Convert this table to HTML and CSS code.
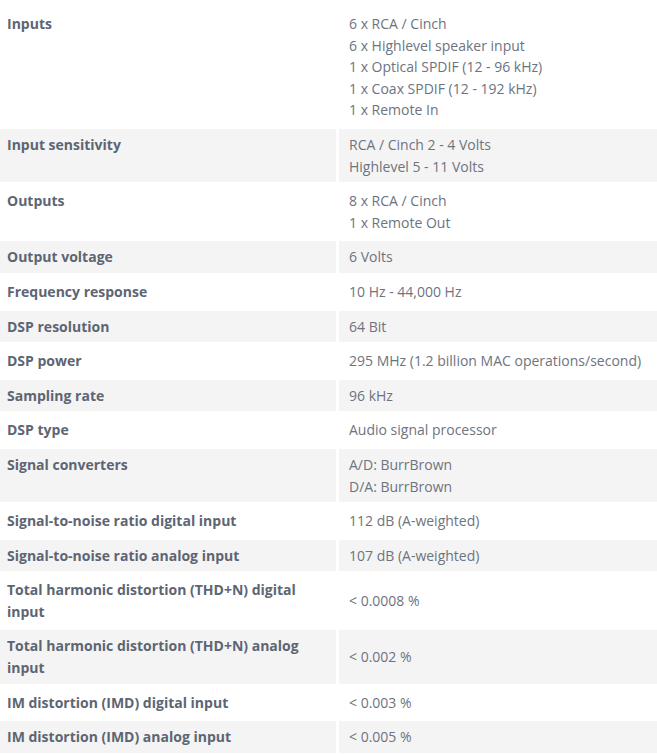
FILE: index.html
```html
<!DOCTYPE html>
<html>
<head>
<meta charset="utf-8">
<link rel="stylesheet" href="styles.css">
</head>
<body>
<div class="wrap">
<table class="specs">
  <colgroup><col class="c1"><col class="c2"></colgroup>
  <tbody>
    <tr><th>Inputs</th><td>6 x RCA / Cinch<br>6 x Highlevel speaker input<br>1 x Optical SPDIF (12 - 96 kHz)<br>1 x Coax SPDIF (12 - 192 kHz)<br>1 x Remote In</td></tr>
    <tr><th>Input sensitivity</th><td>RCA / Cinch 2 - 4 Volts<br>Highlevel 5 - 11 Volts</td></tr>
    <tr><th>Outputs</th><td>8 x RCA / Cinch<br>1 x Remote Out</td></tr>
    <tr><th>Output voltage</th><td>6 Volts</td></tr>
    <tr><th>Frequency response</th><td>10 Hz - 44,000 Hz</td></tr>
    <tr><th>DSP resolution</th><td>64 Bit</td></tr>
    <tr><th>DSP power</th><td>295 MHz (1.2 billion MAC operations/second)</td></tr>
    <tr><th>Sampling rate</th><td>96 kHz</td></tr>
    <tr><th>DSP type</th><td>Audio signal processor</td></tr>
    <tr><th>Signal converters</th><td>A/D: BurrBrown<br>D/A: BurrBrown</td></tr>
    <tr><th>Signal-to-noise ratio digital input</th><td>112 dB (A-weighted)</td></tr>
    <tr><th>Signal-to-noise ratio analog input</th><td>107 dB (A-weighted)</td></tr>
    <tr><th>Total harmonic distortion (THD+N) digital input</th><td>&lt; 0.0008 %</td></tr>
    <tr><th>Total harmonic distortion (THD+N) analog input</th><td>&lt; 0.002 %</td></tr>
    <tr><th>IM distortion (IMD) digital input</th><td>&lt; 0.003 %</td></tr>
    <tr><th>IM distortion (IMD) analog input</th><td>&lt; 0.005 %</td></tr>
  </tbody>
</table>
</div>
</body>
</html>
```

FILE: styles.css
```css
html, body {
  margin: 0;
  padding: 0;
  background: #ffffff;
  overflow: hidden;
}
.wrap {
  margin-top: 5px;
  margin-left: -6px;
  width: 680px;
}
.specs {
  width: 680px;
  table-layout: fixed;
  border-collapse: separate;
  border-spacing: 3px;
  font-family: "Open Sans", "Liberation Sans", sans-serif;
  font-size: 14px;
  line-height: 21.6px;
}
.c1 { width: 339px; }
.c2 { width: auto; }
.specs th,
.specs td {
  padding: 5px 10px;
  text-align: left;
}
.specs th {
  font-weight: 700;
  color: #5d6573;
  vertical-align: top;
}
.specs td {
  font-weight: 400;
  color: #6e7380;
  vertical-align: middle;
}
.specs tr:nth-child(even) th,
.specs tr:nth-child(even) td {
  background: #f4f4f4;
}
```
